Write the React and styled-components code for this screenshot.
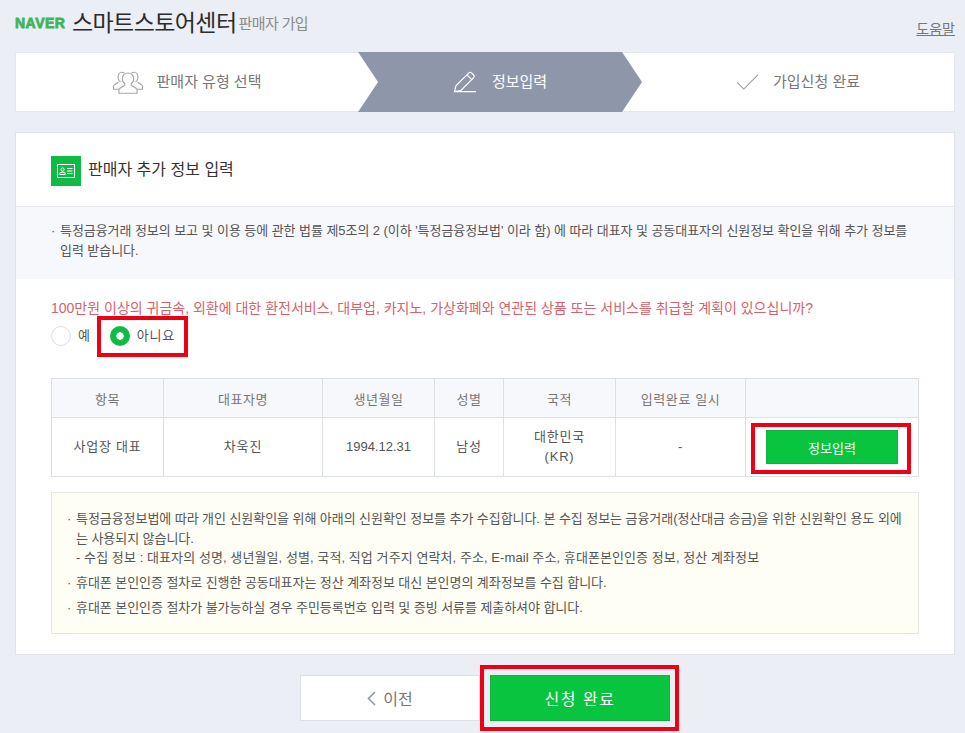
import React from 'react';
import styled, { createGlobalStyle } from 'styled-components';

const GlobalStyle = createGlobalStyle`
  html, body {
    margin: 0;
    padding: 0;
    background: #ebeef4;
  }
  * {
    box-sizing: border-box;
  }
  body {
    font-family: "Liberation Sans", "Noto Sans CJK KR", sans-serif;
    color: #555;
  }
`;

const Page = styled.div`
  width: 965px;
  height: 733px;
  overflow: hidden;
  padding: 0 10px 0 15px;
`;

const Header = styled.header`
  height: 52px;
  display: flex;
  align-items: flex-start;
`;

const Naver = styled.span`
  margin-top: 16px;
  width: 57px;
  font-size: 14px;
  line-height: 15px;
  font-weight: 700;
  color: #3fb558;
  letter-spacing: 0.5px;
  -webkit-text-stroke: 0.8px #3fb558;
`;

const Title = styled.h1`
  margin: 6px 0 0;
  font-size: 23px;
  line-height: 34px;
  font-weight: 400;
  color: #2b2b2b;
  letter-spacing: -0.6px;
`;

const Sub = styled.span`
  margin: 13px 0 0 2px;
  font-size: 15px;
  line-height: 22px;
  color: #8a8a8a;
  letter-spacing: -0.6px;
`;

const Help = styled.a`
  margin: 20px 0 0 auto;
  font-size: 14px;
  line-height: 18px;
  color: #777;
  text-decoration: underline;
`;

const Steps = styled.div`
  height: 60px;
  display: flex;
  background: #fff;
  border: 1px solid #e4e7ec;
`;

const Step = styled.div`
  flex: ${(p) => (p.$w ? `0 0 ${p.$w}px` : '1 1 0')};
  margin: ${(p) => (p.$active ? '-1px 0' : '0')};
  height: ${(p) => (p.$active ? '60px' : '58px')};
  display: flex;
  align-items: center;
  justify-content: center;
  gap: 14px;
  font-size: 15px;
  line-height: 20px;
  color: ${(p) => (p.$active ? '#fff' : '#777')};
  background: ${(p) => (p.$active ? '#8e97aa' : 'transparent')};
  clip-path: ${(p) =>
    p.$active
      ? 'polygon(0 0, calc(100% - 20px) 0, 100% 50%, calc(100% - 20px) 100%, 0 100%, 20px 50%)'
      : 'none'};
`;

const Panel = styled.section`
  margin-top: 20px;
  width: 940px;
  height: 523px;
  background: #fff;
  border: 1px solid #dfe2e7;
`;

const PanelHead = styled.div`
  height: 74px;
  padding: 23px 35px 0;
  display: flex;
  align-items: flex-start;
  gap: 7px;
  border-bottom: 1px solid #e4e7ec;
`;

const IconBox = styled.span`
  width: 30px;
  height: 30px;
  display: flex;
  align-items: center;
  justify-content: center;
  background: #0fbb45;
`;

const PanelTitle = styled.h2`
  margin: 2px 0 0;
  font-size: 16px;
  line-height: 24px;
  font-weight: 400;
  color: #333;
`;

const Notice = styled.div`
  height: 72px;
  padding: 14px 35px 0;
  background: #f7f8fb;
`;

const Bullets = styled.ul`
  margin: 0;
  padding: 0;
  list-style: none;
`;

const Bullet = styled.li`
  position: relative;
  padding-left: 9px;
  margin-bottom: ${(p) => p.$gap || 0}px;
  font-size: 13px;
  line-height: ${(p) => p.$lh || 20}px;
  letter-spacing: -0.06px;
  color: #555;

  &::before {
    content: '·';
    position: absolute;
    left: 0;
    top: 0;
  }
`;

const Body = styled.div`
  padding: 19px 35px 0;
`;

const Question = styled.p`
  margin: 0;
  font-size: 14px;
  line-height: 20px;
  color: #d8616b;
`;

const Radios = styled.div`
  margin-top: 8px;
  display: flex;
  align-items: center;
  height: 20px;
`;

const Radio = styled.span`
  width: 20px;
  height: 20px;
  flex: none;
  border-radius: 50%;
  background: ${(p) => (p.$on ? 'radial-gradient(circle, #fff 3.4px, #0fbb45 4px)' : '#fff')};
  border: ${(p) => (p.$on ? 'none' : '1px solid #dcdfe4')};
`;

const RadioLabel = styled.label`
  margin-left: 7px;
  font-size: 13px;
  line-height: 18px;
  letter-spacing: 0.8px;
  color: #555;
`;

const Mark = styled.span`
  position: relative;
  display: ${(p) => (p.$block ? 'block' : 'inline-flex')};
  align-items: center;
  margin-left: ${(p) => p.$ml || 0}px;

  &::after {
    content: '';
    position: absolute;
    top: ${(p) => p.$t}px;
    right: ${(p) => p.$r}px;
    bottom: ${(p) => p.$b}px;
    left: ${(p) => p.$l}px;
    border: 4px solid #ee0014;
    pointer-events: none;
  }
`;

const Table = styled.table`
  margin-top: 32px;
  width: 867px;
  border-collapse: collapse;
  table-layout: fixed;
  font-size: 13px;
  text-align: center;
`;

const Th = styled.th`
  height: 39px;
  padding: 0;
  font-weight: 400;
  letter-spacing: 0.6px;
  color: #777;
  background: #f7f8fb;
  border: 1px solid #dcdfe4;
`;

const Td = styled.td`
  height: 59px;
  padding: 0;
  line-height: 20px;
  letter-spacing: ${(p) => (p.$num ? 0 : 0.8)}px;
  color: #555;
  border: 1px solid #dcdfe4;
`;

const GreenButton = styled.button`
  display: block;
  width: ${(p) => p.$w}px;
  height: ${(p) => p.$h}px;
  padding: 0;
  margin: 0 auto;
  background: #08c43e;
  border: 1px solid #12b040;
  border-radius: 0;
  color: #fff;
  font-family: inherit;
  font-size: ${(p) => p.$size}px;
  letter-spacing: ${(p) => p.$track || 0}px;
`;

const NoteBox = styled.div`
  margin-top: 15px;
  width: 868px;
  height: 142px;
  padding: 16px 15px 0;
  background: #fefef4;
  border: 1px solid #e6e7e2;
`;

const Sublist = styled.span`
  display: block;
  letter-spacing: 0.08px;
`;

const Footer = styled.div`
  margin-top: 20px;
  display: flex;
  justify-content: center;
  gap: 10px;
`;

const PrevButton = styled.button`
  width: 180px;
  height: 46px;
  padding: 0;
  display: flex;
  align-items: center;
  justify-content: center;
  gap: 7px;
  background: #fff;
  border: 1px solid #dcdfe4;
  border-radius: 0;
  color: #777;
  font-family: inherit;
  font-size: 16px;
`;

const PeopleIcon = () => (
  <svg width="30" height="25" viewBox="0 0 32 26" fill="none" stroke="#a5a5a5" strokeWidth="1.2">
    <path d="M8 12.5c-1.6-1-2.6-3-2.6-5.2C5.4 4 7.2 2 9.6 2c1 0 1.9.3 2.6 1" />
    <path d="M5.8 12.4 1.5 15.6c-.6.5-.9 1-.9 1.8v2.8h5.6" />
    <path d="M24 12.5c1.6-1 2.6-3 2.6-5.2C26.6 4 24.8 2 22.4 2c-1 0-1.9.3-2.6 1" />
    <path d="M26.2 12.4l4.3 3.2c.6.5.9 1 .9 1.8v2.8h-5.6" />
    <path d="M12.6 14.4c-1.7-1.2-2.7-3.2-2.7-5.5 0-3.4 2.7-6 6.1-6s6.1 2.6 6.1 6c0 2.3-1 4.3-2.7 5.5v1.4l5.1 3.4c.8.5 1.2 1.1 1.2 2v3.2H6.3v-3.2c0-.9.4-1.5 1.2-2l5.1-3.4z" />
  </svg>
);

const PencilIcon = () => (
  <svg width="25" height="23" viewBox="0 0 26 24" fill="none" stroke="#fff" strokeWidth="1.2">
    <path d="M1.5 21.5 3 15.5 16.5 2c.8-.8 2-.8 2.8 0l2.2 2.2c.8.8.8 2 0 2.8L8 20.5z" />
    <path d="M14.5 4l5.5 5.5" />
    <path d="M1.5 21.5 H24" />
  </svg>
);

const CheckIcon = () => (
  <svg width="23" height="16" viewBox="0 0 24 17" fill="none" stroke="#999" strokeWidth="1.1">
    <path d="M1 9l7 7L23 1" />
  </svg>
);

const CardIcon = () => (
  <svg width="18" height="14" viewBox="0 0 18 14" fill="none" stroke="#fff" strokeWidth="1">
    <rect x="0.5" y="0.5" width="17" height="13" />
    <circle cx="5.5" cy="5.5" r="1.6" />
    <path d="M2.8 10.5V9.4c0-.6.4-1 1-1h3.4c.6 0 1 .4 1 1v1.1z" />
    <path d="M10 4.5h5.5M10 7h5.5M10 9.5h5.5" />
  </svg>
);

const ChevronIcon = () => (
  <svg width="9" height="15" viewBox="0 0 9 15" fill="none" stroke="#8e97aa" strokeWidth="1.6">
    <path d="M8 1 1.5 7.5 8 14" />
  </svg>
);

export default function App() {
  return (
    <>
      <GlobalStyle />
      <Page>
        <Header>
          <Naver>NAVER</Naver>
          <Title>스마트스토어센터</Title>
          <Sub>판매자 가입</Sub>
          <Help>도움말</Help>
        </Header>

        <Steps>
          <Step $w={342}>
            <PeopleIcon />
            판매자 유형 선택
          </Step>
          <Step $w={284} $active>
            <PencilIcon />
            정보입력
          </Step>
          <Step>
            <CheckIcon />
            가입신청 완료
          </Step>
        </Steps>

        <Panel>
          <PanelHead>
            <IconBox>
              <CardIcon />
            </IconBox>
            <PanelTitle>판매자 추가 정보 입력</PanelTitle>
          </PanelHead>

          <Notice>
            <Bullets>
              <Bullet>
                특정금융거래 정보의 보고 및 이용 등에 관한 법률 제5조의 2 (이하 '특정금융정보법' 이라 함) 에 따라 대표자 및 공동대표자의 신원정보 확인을 위해 추가 정보를 입력 받습니다.
              </Bullet>
            </Bullets>
          </Notice>

          <Body>
            <Question>
              100만원 이상의 귀금속, 외환에 대한 환전서비스, 대부업, 카지노, 가상화폐와 연관된 상품 또는 서비스를 취급할 계획이 있으십니까?
            </Question>
            <Radios>
              <Radio />
              <RadioLabel>예</RadioLabel>
              <Mark $ml={19} $t={-10} $r={-13} $b={-11} $l={-13}>
                <Radio $on />
                <RadioLabel>아니요</RadioLabel>
              </Mark>
            </Radios>

            <Table>
              <colgroup>
                <col width="112" />
                <col width="159" />
                <col width="112" />
                <col width="69" />
                <col width="112" />
                <col width="130" />
                <col width="173" />
              </colgroup>
              <thead>
                <tr>
                  <Th>항목</Th>
                  <Th>대표자명</Th>
                  <Th>생년월일</Th>
                  <Th>성별</Th>
                  <Th>국적</Th>
                  <Th>입력완료 일시</Th>
                  <Th />
                </tr>
              </thead>
              <tbody>
                <tr>
                  <Td>사업장 대표</Td>
                  <Td>차욱진</Td>
                  <Td $num>1994.12.31</Td>
                  <Td>남성</Td>
                  <Td>
                    대한민국
                    <br />
                    (KR)
                  </Td>
                  <Td>-</Td>
                  <Td $num>
                    <Mark $block $t={-7} $r={7} $b={-10} $l={5}>
                      <GreenButton $w={132} $h={34} $size={13}>
                        정보입력
                      </GreenButton>
                    </Mark>
                  </Td>
                </tr>
              </tbody>
            </Table>

            <NoteBox>
              <Bullets>
                <Bullet $lh={19.5} $gap={5}>
                  특정금융정보법에 따라 개인 신원확인을 위해 아래의 신원확인 정보를 추가 수집합니다. 본 수집 정보는 금융거래(정산대금 송금)을 위한 신원확인 용도 외에는 사용되지 않습니다.
                  <Sublist>
                    - 수집 정보 : 대표자의 성명, 생년월일, 성별, 국적, 직업 거주지 연락처, 주소, E-mail 주소, 휴대폰본인인증 정보, 정산 계좌정보
                  </Sublist>
                </Bullet>
                <Bullet $lh={20} $gap={5}>
                  휴대폰 본인인증 절차로 진행한 공동대표자는 정산 계좌정보 대신 본인명의 계좌정보를 수집 합니다.
                </Bullet>
                <Bullet $lh={20}>
                  휴대폰 본인인증 절차가 불가능하실 경우 주민등록번호 입력 및 증빙 서류를 제출하셔야 합니다.
                </Bullet>
              </Bullets>
            </NoteBox>
          </Body>
        </Panel>

        <Footer>
          <PrevButton>
            <ChevronIcon />
            이전
          </PrevButton>
          <Mark $t={-10} $r={-9} $b={-10} $l={-10}>
            <GreenButton $w={180} $h={46} $size={16} $track={1.5}>
              신청 완료
            </GreenButton>
          </Mark>
        </Footer>
      </Page>
    </>
  );
}
